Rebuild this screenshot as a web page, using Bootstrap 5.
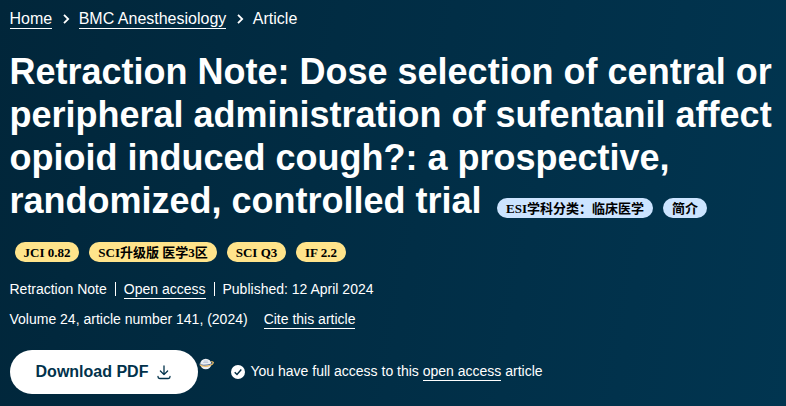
<!DOCTYPE html>
<html lang="en">

<head>
  <meta charset="utf-8">
  <meta name="viewport" content="width=device-width, initial-scale=1">
  <title>Retraction Note | BMC Anesthesiology</title>
  <link href="https://cdn.jsdelivr.net/npm/bootstrap@5.3.3/dist/css/bootstrap.min.css" rel="stylesheet" />
  <style>
    body {
      font-family: "Liberation Sans", Arial, sans-serif;
      color: #fff;
      background: #012b41;
      overflow: hidden;
    }

    .article-header {
      min-height: 406px;
      padding: 9px 9.5px 0;
      background: linear-gradient(100deg, #01263a 0%, #01324c 80%, #013550 100%);
    }

    .article-header a {
      color: #fff;
      text-decoration: none;
      border-bottom: 1px solid #fff;
    }

    .crumbs {
      height: 20px;
      font-size: 16px;
      line-height: 19px;
    }

    .crumbs svg {
      margin: 0 9px 0 9.5px;
    }

    .article-title {
      margin-top: 21px;
      font-size: 36px;
      line-height: 43px;
    }

    .tag {
      display: inline-block;
      height: 20px;
      border-radius: 10px;
      font: bold 13px/21px "Liberation Serif", "Noto Sans CJK SC", serif;
      color: #000;
      text-align: center;
      white-space: nowrap;
    }

    .tag-blue {
      background: #cce4ff;
    }

    .tag-yellow {
      background: #ffe48b;
    }

    .tag-subject {
      width: 156px;
    }

    .tag-intro {
      width: 44px;
    }

    .tag-jci {
      width: 64px;
    }

    .tag-zone {
      width: 128px;
    }

    .tag-quartile {
      width: 59px;
    }

    .tag-if {
      width: 50px;
    }

    .title-tags {
      display: inline-flex;
      gap: 10px;
      margin-left: 5.5px;
      vertical-align: 0;
    }

    .rank-tags {
      gap: 10px;
      padding: 0 5.5px;
      margin-top: 20px;
    }

    .meta {
      font-size: 14px;
      line-height: 17px;
    }

    .meta-first {
      margin-top: 19px;
      margin-bottom: 12px;
    }

    .sep {
      width: 1px;
      height: 14px;
      margin: 1px 8px 0;
      background: #fff;
    }

    .actions {
      margin-top: 21px;
    }

    .download {
      width: 188px;
      height: 44px;
      margin-left: .5px;
      font-size: 16px;
      color: #01324b;
    }

    .planet {
      margin: 8px 0 0 1px;
    }

    .access {
      margin: 13px 0 0 15.5px;
    }

    .access svg {
      margin: 2px 6px 0 0;
    }
  </style>
</head>

<body>
  <header class="article-header">
    <nav class="crumbs d-flex">
      <a href="#">Home</a>
      <svg class="align-self-center" width="8" height="10" viewBox="0 0 8 10" fill="none" stroke="#fff" stroke-width="1.8"><path d="M2 .8 6.2 5 2 9.2" /></svg>
      <a href="#">BMC Anesthesiology</a>
      <svg class="align-self-center" width="8" height="10" viewBox="0 0 8 10" fill="none" stroke="#fff" stroke-width="1.8"><path d="M2 .8 6.2 5 2 9.2" /></svg>
      <span>Article</span>
    </nav>

    <h1 class="article-title fw-bold mb-0">
      Retraction Note: Dose selection of central or<br>
      peripheral administration of sufentanil affect<br>
      opioid induced cough?: a prospective,<br>
      randomized, controlled trial
      <span class="title-tags">
        <span class="tag tag-blue tag-subject">ESI学科分类：临床医学</span>
        <span class="tag tag-blue tag-intro">简介</span>
      </span>
    </h1>

    <div class="rank-tags d-flex">
      <span class="tag tag-yellow tag-jci">JCI 0.82</span>
      <span class="tag tag-yellow tag-zone">SCI升级版 医学3区</span>
      <span class="tag tag-yellow tag-quartile">SCI Q3</span>
      <span class="tag tag-yellow tag-if">IF 2.2</span>
    </div>

    <div class="meta meta-first d-flex align-items-start">
      <span>Retraction Note</span>
      <span class="sep"></span>
      <a href="#">Open access</a>
      <span class="sep"></span>
      <span>Published: 12 April 2024</span>
    </div>
    <div class="meta d-flex">
      <span class="me-3">Volume 24, article number 141, (2024)</span>
      <a href="#">Cite this article</a>
    </div>

    <div class="actions d-flex align-items-start">
      <button type="button" class="download btn btn-light bg-white border-0 rounded-pill fw-bold p-0 d-flex align-items-center justify-content-center">
        Download PDF
        <svg class="ms-2" width="16" height="16" viewBox="0 0 16 16" fill="none" stroke="#01324b" stroke-width="1.3" stroke-linecap="round" stroke-linejoin="round"><path d="M8 2v8.5M4.4 7 8 10.6 11.6 7M2 12.4v.4a1.7 1.7 0 0 0 1.7 1.7h8.6a1.7 1.7 0 0 0 1.7-1.7v-.4" /></svg>
      </button>
      <svg class="planet" width="16" height="12" viewBox="0 0 16 12">
        <ellipse cx="6.8" cy="6" rx="5.6" ry="5.3" fill="#eceff4" />
        <path d="M4.8 3h4M4.2 4.4h5" stroke="#b3bfd6" stroke-width=".8" />
        <path d="M1 5.4C.4 6.6 2 7.4 5 7.3c4-.1 8.2-1.3 8.9-2.9" fill="none" stroke="#4a6a9e" stroke-width="1.1" />
        <path d="M.8 6.6c1.6 2.3 7 2.1 10.6.6 1.7-.7 2.8-1.6 3-2.6.1-.6-1-.9-2.2-1" fill="none" stroke="#f0bd62" stroke-width="1.1" />
      </svg>
      <div class="access meta d-flex align-items-start">
        <svg width="14" height="14" viewBox="0 0 14 14">
          <circle cx="7" cy="7" r="7" fill="#fff" />
          <path d="m3.7 7.2 2.3 2.3 4.3-5" fill="none" stroke="#012b41" stroke-width="1.4" />
        </svg>
        <span>You have full access to this&nbsp;</span>
        <a href="#">open access</a>
        <span>&nbsp;article</span>
      </div>
    </div>
  </header>
  <script src="https://cdn.jsdelivr.net/npm/bootstrap@5.3.3/dist/js/bootstrap.bundle.min.js"></script>
</body>

</html>
